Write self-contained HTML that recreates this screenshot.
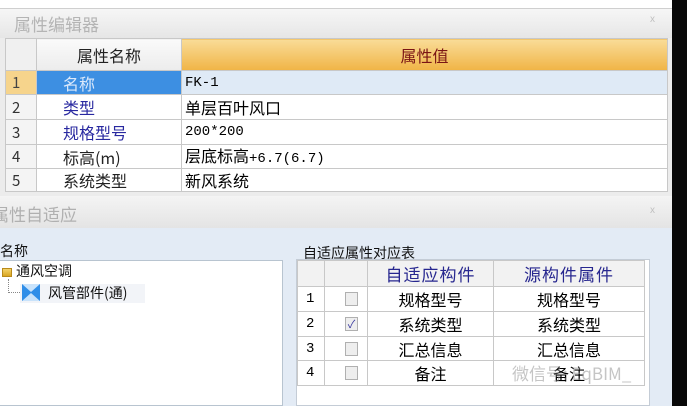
<!DOCTYPE html>
<html><head><meta charset="utf-8"><style>
*{margin:0;padding:0;box-sizing:border-box}
body{width:687px;height:406px;overflow:hidden;background:#fff;position:relative;font-family:"Liberation Sans","Noto Sans CJK SC",sans-serif}
.abs{position:absolute}
.cjk{font-family:"Noto Sans CJK SC","WenQuanYi Zen Hei",sans-serif}
table{border-collapse:collapse;position:absolute;table-layout:fixed}
td{border:1px solid #c8c8c8;overflow:hidden;white-space:nowrap;font-size:15px;line-height:1;padding:0}
.mono{font-family:"Liberation Mono","Noto Sans CJK SC",monospace;font-size:14px}
</style></head><body>
<div class="abs" style="left:672px;top:0;width:15px;height:406px;background:#080808"></div>
<div class="abs" style="left:0;top:0;width:672px;height:8px;background:#fff"></div>
<!-- top panel -->
<div class="abs" style="left:0;top:8px;width:672px;height:188px;background:#ececec;border-top:1px solid #cfcfcf"></div>
<div class="abs" style="left:0;top:9px;width:672px;height:29px;background:linear-gradient(#f6f6f6,#e6e6e6)"></div>
<div class="abs cjk" style="left:14px;top:11px;font-size:17px;color:#b4b4b4">属性编辑器</div>
<div class="abs" style="left:650px;top:14px;font-size:10px;color:#c0c0c0">x</div>
<table class="cjk" style="left:5px;top:38px;width:663px">
<colgroup><col style="width:31px"><col style="width:145px"><col></colgroup>
<tr style="height:32px"><td style="background:#f0f0f0"></td><td style="background:linear-gradient(#fafafa,#ececec);text-align:center;font-size:16px;color:#222">属性名称</td><td style="background:linear-gradient(#f9dc98,#f0b446);text-align:center;font-size:16px;color:#7a1414">属性值</td></tr>
<tr style="height:24px"><td style="background:#f6d48c;color:#444;padding-left:6px">1</td><td style="background:#3d8fe2;color:#dbe9fb;padding-left:26px;font-size:16px">名称</td><td class="mono" style="background:#dfeaf6;padding-left:3px">FK-1</td></tr>
<tr style="height:25px;background:#fff"><td style="background:#f4f4f4;padding-left:6px;color:#333">2</td><td style="color:#2828a0;padding-left:26px;font-size:16px">类型</td><td style="padding-left:3px;font-size:16px">单层百叶风口</td></tr>
<tr style="height:25px;background:#fff"><td style="background:#f4f4f4;padding-left:6px;color:#333">3</td><td style="color:#2828a0;padding-left:26px;font-size:16px">规格型号</td><td class="mono" style="padding-left:3px">200*200</td></tr>
<tr style="height:24px;background:#fff"><td style="background:#f4f4f4;padding-left:6px;color:#333">4</td><td style="color:#222;padding-left:26px;font-size:16px">标高(m)</td><td style="padding-left:3px;font-size:16px">层底标高<span class="mono">+6.7(6.7)</span></td></tr>
<tr style="height:23px;background:#fff"><td style="background:#f4f4f4;padding-left:6px;color:#333">5</td><td style="color:#222;padding-left:26px;font-size:16px">系统类型</td><td style="padding-left:3px;font-size:16px">新风系统</td></tr>
</table>
<!-- lower panel -->
<div class="abs" style="left:0;top:196px;width:672px;height:210px;background:#e3ebf5"></div>
<div class="abs" style="left:0;top:196px;width:672px;height:32px;background:linear-gradient(#f4f4f4,#e4e4e4)"></div>
<div class="abs cjk" style="left:-8px;top:201px;font-size:17px;color:#b0b0b0">属性自适应</div>
<div class="abs" style="left:650px;top:205px;font-size:10px;color:#c0c0c0">x</div>
<div class="abs cjk" style="left:0;top:241px;font-size:14px;color:#111">名称</div>
<div class="abs" style="left:0;top:260px;width:283px;height:146px;background:#fff;border:1px solid #b8c4d0;border-left:none"></div>
<div class="abs" style="left:2px;top:268px;width:10px;height:9px;background:linear-gradient(#f3d36a,#d9a521);border:1px solid #b98a1a"></div>
<div class="abs cjk" style="left:16px;top:261px;font-size:14px;color:#111">通风空调</div>
<div class="abs" style="left:8px;top:279px;height:14px;border-left:1px dotted #888"></div>
<div class="abs" style="left:8px;top:292px;width:14px;border-top:1px dotted #888"></div>
<div class="abs" style="left:20px;top:284px;width:125px;height:19px;background:#f2f4f8"></div>
<svg class="abs" style="left:22px;top:284px" width="18" height="17"><rect width="18" height="17" fill="#c9e3fb"/><path d="M0 0 L9 8 L18 0 L18 17 L9 9 L0 17Z" fill="#2f8ee8"/></svg>
<div class="abs cjk" style="left:48px;top:283px;font-size:14px;color:#111">风管部件(通)</div>
<div class="abs cjk" style="left:303px;top:243px;font-size:14px;color:#111">自适应属性对应表</div>
<div class="abs" style="left:296px;top:259px;width:354px;height:147px;background:#fff;border:1px solid #c4ccd6"></div>
<table class="cjk" style="left:297px;top:260px;width:348px">
<colgroup><col style="width:27px"><col style="width:43px"><col style="width:126px"><col></colgroup>
<tr style="height:26px;background:#f2f2f2"><td></td><td></td><td style="text-align:center;color:#27278f;font-size:17px;letter-spacing:1px">自适应构件</td><td style="text-align:center;color:#27278f;font-size:17px;letter-spacing:1px">源构件属件</td></tr>
<tr style="height:25px"><td class="mono" style="padding-left:8px">1</td><td><div style="margin-left:20px;width:13px;height:14px;border:1px solid #b0b0b0;background:#eee"></div></td><td style="text-align:center;font-size:16px">规格型号</td><td style="text-align:center;font-size:16px">规格型号</td></tr>
<tr style="height:25px"><td class="mono" style="padding-left:8px">2</td><td><div style="margin-left:20px;width:13px;height:14px;border:1px solid #b0b0b0;background:#eee;font-size:11px;color:#3a3aa0;text-align:center;line-height:12px">✓</div></td><td style="text-align:center;font-size:16px">系统类型</td><td style="text-align:center;font-size:16px">系统类型</td></tr>
<tr style="height:24px"><td class="mono" style="padding-left:8px">3</td><td><div style="margin-left:20px;width:13px;height:14px;border:1px solid #b0b0b0;background:#eee"></div></td><td style="text-align:center;font-size:16px">汇总信息</td><td style="text-align:center;font-size:16px">汇总信息</td></tr>
<tr style="height:25px"><td class="mono" style="padding-left:8px">4</td><td><div style="margin-left:20px;width:13px;height:14px;border:1px solid #b0b0b0;background:#eee"></div></td><td style="text-align:center;font-size:16px">备注</td><td style="text-align:center;font-size:16px">备注</td></tr>
</table>
<div class="abs cjk" style="left:512px;top:360px;font-size:17px;color:rgba(150,150,150,0.55)">微信号: EqBIM_</div>
</body></html>
